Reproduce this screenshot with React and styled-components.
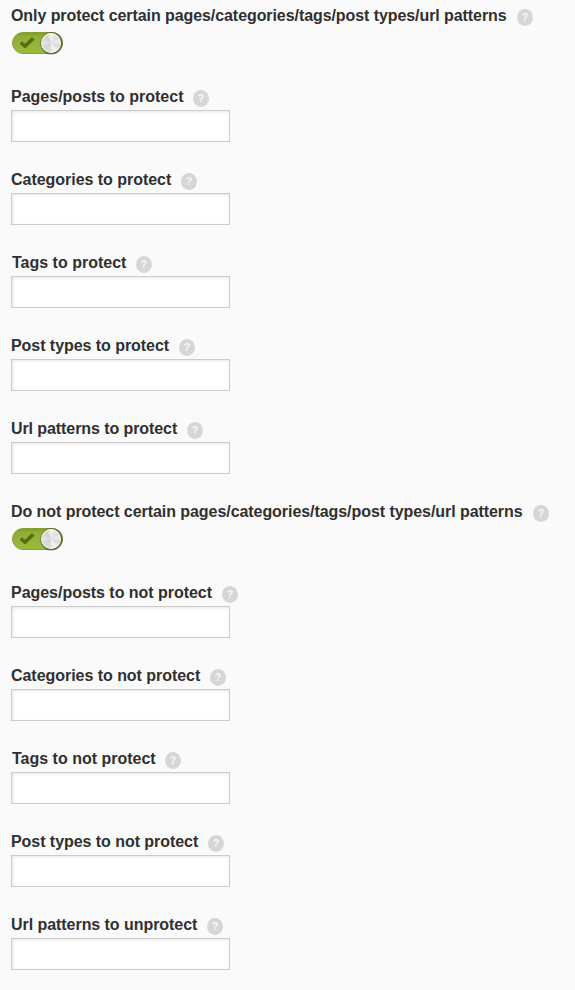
import React from "react";
import styled, { createGlobalStyle } from "styled-components";

const GlobalStyle = createGlobalStyle`
  * { box-sizing: border-box; }
  body { margin: 0; background: #fafafa; font-family: "Liberation Sans", Arial, sans-serif; }
`;
const Form = styled.main`
  height: 990px;
  padding: 6px 11px 0;
  overflow: hidden;
  background: #fafafa;
`;
const Setting = styled.section`
  height: ${(p) => (p.$toggle ? 81 : 83)}px;
`;
const Header = styled.div`
  display: flex;
  align-items: flex-start;
  height: ${(p) => (p.$toggle ? 25 : 23)}px;
`;
const Label = styled.label`
  flex: none;
  width: ${(p) => p.$width}px;
  padding-left: ${(p) => p.$indent || 0}px;
  letter-spacing: ${(p) => p.$tracking || 0}px;
  font-size: 16px;
  font-weight: 700;
  line-height: 20px;
  white-space: nowrap;
  color: #303030;
`;
const Help = styled.span`
  flex: none;
  width: 16px;
  height: 17px;
  margin-top: 3px;
  border-radius: 50%;
  background: #d5d6d7;
  color: #f8f8f8;
  font-size: 10.5px;
  font-weight: 700;
  line-height: 17px;
  text-align: center;
`;
const Field = styled.input`
  display: block;
  width: 219px;
  height: 32px;
  border: 1px solid #ccc;
  background: #fff;
  box-shadow: inset 1px 1px 3px rgba(0, 0, 0, 0.1);
  outline: 0;
`;
const Switch = styled.svg`
  display: block;
`;
const KnobFace = styled.div`
  width: 20px;
  height: 20px;
  border-radius: 50%;
  box-shadow: inset 0 0 1px 1px rgba(255, 255, 255, 0.65);
  background: conic-gradient(
    #f2f2f2, #dedede 40deg, #ededed 75deg, #dadada 110deg, #e6e6e6 135deg, #f5f5f5 155deg,
    #dcdcdc 190deg, #d2d2d2 225deg, #e2e2e2 270deg, #d8d8d8 300deg, #cecece 325deg, #f2f2f2 360deg
  );
`;

function Toggle() {
  return (
    <Switch width="54" height="27" viewBox="0 0 54 27">
      <defs>
        <linearGradient id="track" x2="0" y2="1">
          <stop stopColor="#809d2b" />
          <stop offset=".2" stopColor="#91ae35" />
          <stop offset="1" stopColor="#9dba3e" />
        </linearGradient>
      </defs>
      <rect x="1.5" y="1.5" width="50" height="21" rx="10.5" fill="url(#track)" stroke="#86a034" />
      <path d="M9.8 11.6l4.2 3.7 8.2-7.8" fill="none" stroke="#536e12" strokeWidth="3.5" strokeLinejoin="round" />
      <ellipse cx="40" cy="13.3" rx="10.8" ry="10.8" fill="#000" opacity=".18" />
      <circle cx="40.6" cy="12" r="11.1" fill="#5b6f29" />
      <foreignObject x="30" y="2" width="20" height="20"><KnobFace /></foreignObject>
    </Switch>
  );
}

const groups = [
  {
    title: { text: "Only protect certain pages/categories/tags/post types/url patterns", width: 506, tracking: -0.076 },
    fields: [
      { text: "Pages/posts to protect", width: 182 },
      { text: "Categories to protect", width: 170, tracking: -0.03 },
      { text: "Tags to protect", width: 125, indent: 1 },
      { text: "Post types to protect", width: 168, tracking: -0.05 },
      { text: "Url patterns to protect", width: 176, tracking: -0.08 },
    ],
  },
  {
    title: { text: "Do not protect certain pages/categories/tags/post types/url patterns", width: 522, tracking: -0.06 },
    fields: [
      { text: "Pages/posts to not protect", width: 211, tracking: -0.03 },
      { text: "Categories to not protect", width: 199, tracking: -0.04 },
      { text: "Tags to not protect", width: 154, indent: 1 },
      { text: "Post types to not protect", width: 197, tracking: -0.05 },
      { text: "Url patterns to unprotect", width: 196, tracking: -0.05 },
    ],
  },
];

function SettingHeader({ item, toggle }) {
  return (
    <Header $toggle={toggle}>
      <Label $width={item.width} $indent={item.indent} $tracking={item.tracking}>{item.text}</Label>
      <Help>?</Help>
    </Header>
  );
}

export default function App() {
  return (
    <Form>
      <GlobalStyle />
      {groups.map(({ title, fields }) => (
        <React.Fragment key={title.text}>
          <Setting $toggle>
            <SettingHeader item={title} toggle />
            <Toggle />
          </Setting>
          {fields.map((item) => (
            <Setting key={item.text}>
              <SettingHeader item={item} />
              <Field aria-label={item.text} />
            </Setting>
          ))}
        </React.Fragment>
      ))}
    </Form>
  );
}
